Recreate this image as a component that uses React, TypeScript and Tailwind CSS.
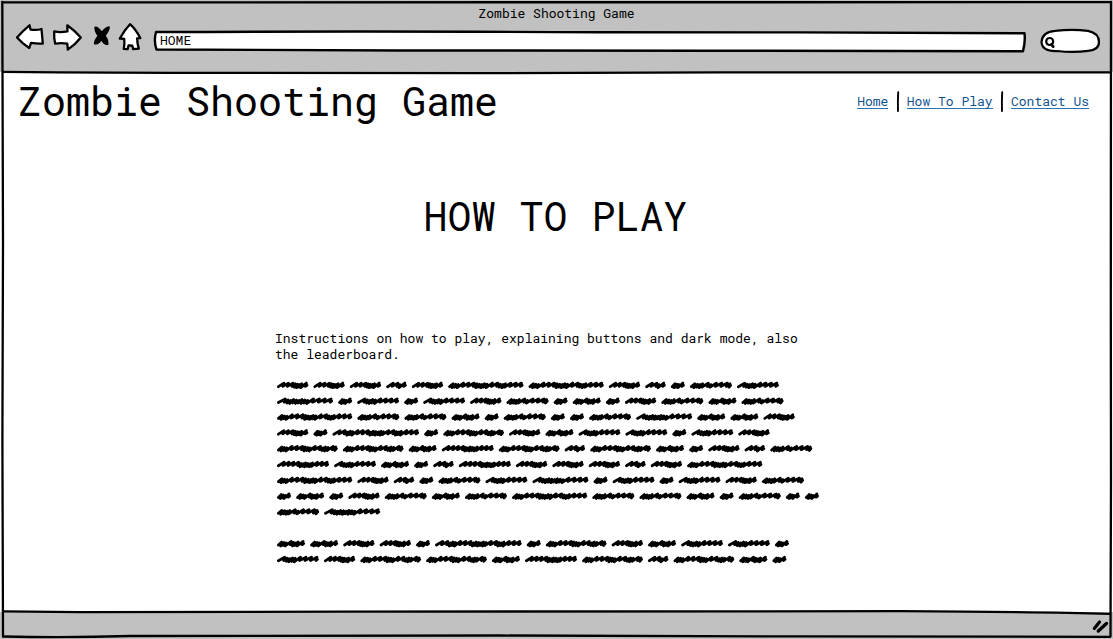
import type { ReactNode } from "react";

const FONT = "font-['Roboto_Mono','DejaVu_Sans_Mono',monospace]";

/* Each word shape: its width and its run of long (L) and short (D) pen strokes. */
const WORDS: Record<string, [number, string]> = {
  a: [14, "DDDL"],
  b: [20.5, "LLDL"],
  c: [28, "DDDLDDDL"],
  d: [31.3, "LLLDDDDL"],
  e: [42, "DDDDLDLLLD"],
  f: [41.8, "LDDDDLLLL"],
  g: [52, "LLLLDDDDDDLLL"],
  h: [56, "LDDDDDDDDLLLL"],
  i: [60.7, "DDDLLLDDDLLDDDLD"],
  j: [75.2, "DDDLLLDDDDDLLDDDLLL"],
  k: [86.5, "LLDDDLLLDDDDDDLLDDDLLL"],
};

const LONG = 5;
const SHORT = 2.4;

const LINES = [
  "dddbdjjdbaef",
  "hafafdeacadece",
  "jeecaeaaehccd",
  "dakaidcffafd",
  "iicgibicadbe",
  "gfcabgdddbdj",
  "jdbaefhafafde",
  "acadecejeecaeaa",
  "eh",
  "",
  "ccddakaidcffa",
  "fdiicgibica",
];

function strokePath(x0: number, cy: number, width: number, run: string) {
  const strokes = run.split("");
  const total = strokes.reduce((n, s) => n + (s === "L" ? LONG : SHORT), 0);
  const scale = (width - 4.2) / total;
  let x = x0 + 1.4;
  let d = `M${x.toFixed(1)} ${(cy + 1.6).toFixed(1)}`;
  strokes.forEach((s, i) => {
    const long = s === "L";
    const step = (long ? LONG : SHORT) * scale;
    const top = long ? cy - 2 : cy - 1.3 + (i % 3) * 0.4;
    const low = long ? cy + 1.3 : cy + 2.6 - (i % 2) * 0.5;
    d += `L${(x + step + 0.9).toFixed(1)} ${top.toFixed(1)}L${(x + step - 0.2).toFixed(1)} ${low.toFixed(1)}`;
    x += step;
  });
  return d + `L${(x0 + width - 1.3).toFixed(1)} ${(cy + 0.2).toFixed(1)}`;
}

function Scribble() {
  const paths: ReactNode[] = [];
  LINES.forEach((line, row) => {
    let x = 2;
    line.split("").forEach((key, i) => {
      const [width, run] = WORDS[key];
      paths.push(<path key={`${row}-${i}`} d={strokePath(x, 7.1 + row * 15.83, width, run)} />);
      x += width + 5.1;
    });
  });
  return (
    <svg width="550" height="190" viewBox="0 0 550 190" fill="none" stroke="#000" strokeWidth="2.8" strokeLinecap="round" strokeLinejoin="round">
      {paths}
    </svg>
  );
}

function NavIcons() {
  return (
    <svg width="140" height="36" viewBox="8 20 140 36" className="shrink-0" fill="#fff" stroke="#000" strokeWidth="2.3" strokeLinejoin="round" strokeLinecap="round">
      <path d="M17 37.5Q23 30.5 29.5 25.3L30.6 29.6Q37 30.5 41.5 29L42.8 43.5Q37 43.8 31 42.8L29.3 48L23 43.3Z" />
      <path d="M54.2 31.3Q60 32.8 67.5 31.3L67.3 25.3Q74 30 80.8 37.5Q75 45 67.8 49.6L67.3 43.6Q61 42.6 55.2 43.7Q53.8 38 54.2 31.3Z" />
      <path d="M130 24.2Q135.5 29 140.3 38L137.1 38.3Q137.2 43.5 138.8 48.6L133.2 49.2L132.3 45.6L128.5 45.5L127.6 49.2L123.8 48.8Q124.8 43.5 124.2 38.8L119.8 38.5Q124.5 30 130 24.2Z" />
      <path d="M95.2 27.2Q98.5 27.2 101.8 32.4Q104.8 28 109 27Q109.6 29.4 104.8 35.8Q107.6 38.5 107.8 44Q104.6 45.2 101.4 39.4Q98.4 44.5 94.6 43.6Q94.4 41.2 98.4 35.8Q95 31.5 95.2 27.2Z" fill="#000" strokeWidth="1.6" />
    </svg>
  );
}

function Frame() {
  return (
    <svg className="pointer-events-none absolute inset-0" width="1113" height="639" viewBox="0 0 1113 639" fill="none" stroke="#000" strokeWidth="2.3" strokeLinecap="round">
      <path d="M2.5 2.3Q560 1.2 1111 2.2" />
      <path d="M2.3 2L3 240L2.4 440L3 636.5" />
      <path d="M1111 2L1110.8 300L1111 480L1110.5 636.5" />
      <path d="M3 71.8Q120 73 250 72.9L480 73.2L720 72.4L1110 72.4" />
      <path d="M3 611.3L80 612.2L340 611.6Q700 610.6 900 611.2Q1040 612 1110 613.9" />
      <path d="M3 636.5Q70 637.8 130 636L500 635.5L800 636.4L1110 636.8" />
    </svg>
  );
}

function Divider() {
  return (
    <svg width="4" height="22" viewBox="0 0 4 22" className="shrink-0">
      <path d="M2.2 2.2Q1.7 10 2 21" fill="none" stroke="#000" strokeWidth="1.9" strokeLinecap="round" />
    </svg>
  );
}

function NavLink({ children }: { children: ReactNode }) {
  return (
    <a href="#" className="border-b border-[#2b73b0] text-[13px] leading-[14px] text-[#12528f]">
      {children}
    </a>
  );
}

export default function App() {
  return (
    <div className={`relative flex h-[639px] w-[1113px] flex-col overflow-hidden bg-white text-black ${FONT}`}>
      <header className="flex h-[72px] shrink-0 flex-col bg-[#c1c1c1]">
        <div className="h-5 pt-[5px] text-center text-[13px] leading-[17px]">Zombie Shooting Game</div>
        <div className="flex h-9 pl-2">
          <NavIcons />
          <div className="relative h-9 w-[882px] shrink-0">
            <svg className="absolute inset-0" width="882" height="36" viewBox="148 20 882 36" fill="#fff" stroke="#000" strokeWidth="2.4" strokeLinejoin="round">
              <path d="M156 32Q400 31 600 32.3L800 32.4L1024.5 33.3Q1025.5 42 1023 51.2L700 50.7L400 50.5L156.5 49.5Q153.5 41 156 32Z" />
            </svg>
            <div className="relative pl-3 pt-3 text-[13px] leading-[17px]">HOME</div>
          </div>
          <svg width="75" height="36" viewBox="1030 20 75 36" className="shrink-0" fill="#fff" stroke="#000" strokeWidth="2.2" strokeLinecap="round">
            <path d="M1055 30.8Q1072 28.8 1088 30.8Q1099 33 1099 42Q1099 50 1088 50.8Q1074 52.8 1057 51Q1042 51.5 1041.5 42Q1042 32 1055 30.8Z" />
            <circle cx="1049.7" cy="41.5" r="3.5" />
            <path d="M1051.5 44.5L1053.2 46.6" strokeWidth="2.8" />
          </svg>
        </div>
      </header>

      <div className="flex h-[68px] shrink-0 items-start justify-between pl-[18px] pr-6">
        <h1 className="pt-0.5 text-[40px] leading-[53px]">Zombie Shooting Game</h1>
        <nav className="flex items-center gap-[7.2px] pt-[18px]">
          <NavLink>Home</NavLink>
          <Divider />
          <NavLink>How To Play</NavLink>
          <Divider />
          <NavLink>Contact Us</NavLink>
        </nav>
      </div>

      <main className="flex grow flex-col">
        <h2 className="pr-0.5 pt-[49px] text-center text-[40px] leading-[53px]">HOW TO PLAY</h2>
        <div className="ml-[275px] mt-[88px] w-[550px]">
          <p className="text-[13px] leading-4">
            Instructions on how to play, explaining buttons and dark mode, also
            <br />
            the leaderboard.
          </p>
          <div className="mt-4">
            <Scribble />
          </div>
        </div>
      </main>

      <footer className="flex h-[27px] shrink-0 justify-end bg-[#c1c1c1]">
        <svg width="24" height="24" viewBox="1088 612 24 24" stroke="#000" strokeLinecap="round">
          <path d="M1093.3 628.5L1098.5 622" strokeWidth="3.2" />
          <path d="M1097.3 631L1105.5 623.5" strokeWidth="3.4" />
        </svg>
      </footer>
      <Frame />
    </div>
  );
}
